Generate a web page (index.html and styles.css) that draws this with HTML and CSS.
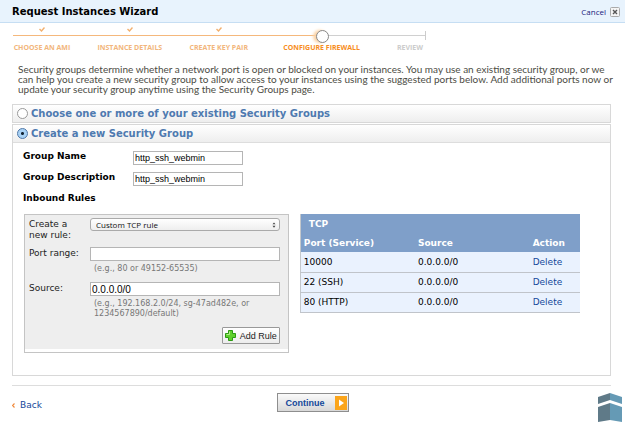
FILE: index.html
```html
<!DOCTYPE html>
<html lang="en">
<head>
    <meta charset="UTF-8">
    <meta name="viewport" content="width=device-width, initial-scale=1.0">
    <title>Request Instances Wizard</title>
    <link rel="stylesheet" href="styles.css">
</head>
<body>
    <header class="titlebar">
        <h1>Request Instances Wizard</h1>
        <button type="button" class="cancel">Cancel
            <svg class="close" viewBox="0 0 10 10"><rect x="0.5" y="0.5" width="9" height="9" rx="1" fill="#f4f4f4" stroke="#aaa"/><path d="M3 3l4 4M7 3l-4 4" stroke="#555" stroke-width="1.4"/></svg>
        </button>
    </header>

    <ol class="steps">
        <li class="done">
            <svg class="check" viewBox="0 0 6 5"><path d="M0.5 2l2 2 3-3.5" fill="none" stroke="#f2b06f" stroke-width="1.4"/></svg>
            <span class="track"></span>
            <span>CHOOSE AN AMI</span>
        </li>
        <li class="done">
            <svg class="check" viewBox="0 0 6 5"><path d="M0.5 2l2 2 3-3.5" fill="none" stroke="#f2b06f" stroke-width="1.4"/></svg>
            <span class="track"></span>
            <span>INSTANCE DETAILS</span>
        </li>
        <li class="done">
            <svg class="check" viewBox="0 0 6 5"><path d="M0.5 2l2 2 3-3.5" fill="none" stroke="#f2b06f" stroke-width="1.4"/></svg>
            <span class="track"></span>
            <span>CREATE KEY PAIR</span>
        </li>
        <li class="current">
            <span class="check"></span>
            <span class="track"></span>
            <span>CONFIGURE FIREWALL</span>
        </li>
        <li class="todo">
            <span class="check"></span>
            <span class="track"></span>
            <span>REVIEW</span>
        </li>
    </ol>

    <main>
        <p class="intro">Security groups determine whether a network port is open or blocked on your instances. You may use an existing security group, or we can help you create a new security group to allow access to your instances using the suggested ports below. Add additional ports now or update your security group anytime using the Security Groups page.</p>

        <div class="panel">
            <label class="panel-head"><input type="radio" name="group">Choose one or more of your existing Security Groups</label>
        </div>
        <div class="panel">
            <label class="panel-head"><input type="radio" name="group" checked>Create a new Security Group</label>
            <div class="panel-body">
                <div class="field">
                    <label for="name">Group Name</label>
                    <input type="text" id="name" value="http_ssh_webmin">
                </div>
                <div class="field">
                    <label for="desc">Group Description</label>
                    <input type="text" id="desc" value="http_ssh_webmin">
                </div>
                <h2>Inbound Rules</h2>

                <div class="rules">
                    <form class="rule-box">
                        <div class="rule-form">
                            <label for="rule">Create a new rule:</label>
                            <div class="select">
                                <select id="rule"><option>Custom TCP rule</option></select>
                                <svg viewBox="0 0 5 8"><path d="M2.5 0.5L4.5 3H0.5zM2.5 7.5L0.5 5h4z" fill="#444"/></svg>
                            </div>
                            <label for="port">Port range:</label>
                            <div>
                                <input type="text" id="port">
                                <p class="hint">(e.g., 80 or 49152-65535)</p>
                            </div>
                            <label for="source">Source:</label>
                            <div>
                                <input type="text" id="source" value="0.0.0.0/0">
                                <p class="hint">(e.g., 192.168.2.0/24, sg-47ad482e, or 1234567890/default)</p>
                            </div>
                            <button type="button" class="add">
                                <svg viewBox="0 0 11 11"><path d="M3.5 0.5h4v3h3v4h-3v3h-4v-3h-3v-4h3z" fill="#5fd02c" stroke="#2b9a12"/><path d="M4.5 1.5v3h-3" fill="none" stroke="#b4f08c"/></svg>
                                Add Rule
                            </button>
                        </div>
                    </form>

                    <table class="ports">
                        <thead>
                            <tr><th colspan="3" class="proto">TCP</th></tr>
                            <tr><th>Port (Service)</th><th>Source</th><th>Action</th></tr>
                        </thead>
                        <tbody>
                            <tr><td>10000</td><td>0.0.0.0/0</td><td><a href="#">Delete</a></td></tr>
                            <tr><td>22 (SSH)</td><td>0.0.0.0/0</td><td><a href="#">Delete</a></td></tr>
                            <tr><td>80 (HTTP)</td><td>0.0.0.0/0</td><td><a href="#">Delete</a></td></tr>
                        </tbody>
                    </table>
                </div>
            </div>
        </div>
        <hr>
    </main>

    <footer>
        <a href="#" class="back"><svg viewBox="0 0 3 5"><path d="M2.5 0.5l-2 2 2 2" fill="none" stroke="#f08a3c" stroke-width="1.2"/></svg>Back</a>
        <button type="button" class="continue">Continue
            <svg viewBox="0 0 12 14"><rect width="12" height="14" fill="#fba51b"/><path d="M4 3.5l5 3.5-5 3.5z" fill="#fff"/></svg>
        </button>
        <svg class="logo" viewBox="0 0 24 29">
            <path d="M0 4l12-4v7L0 11z" fill="#5f7a88"/>
            <path d="M12 0l12 4v7L12 7z" fill="#659ab5"/>
            <path d="M0 14l12-4v17L0 29z" fill="#5f7a88"/>
            <path d="M12 10l12 4v15l-12-2z" fill="#659ab5"/>
        </svg>
    </footer>
</body>
</html>
```
FILE: styles.css
```css
* {
    box-sizing: border-box;
}

body {
    margin: 0;
    background-color: #fff;
    color: #000;
    font-family: Verdana, "DejaVu Sans", sans-serif;
    font-size: 9px;
}

input, select, button {
    font-family: Arial, "Liberation Sans", sans-serif;
    font-size: 9px;
    margin: 0;
}

svg {
    flex: none;
}

a {
    color: #14489a;
    text-decoration: none;
}

.titlebar {
    display: flex;
    justify-content: space-between;
    align-items: center;
    height: 23px;
    padding: 1px 5px 0 12px;
    background-color: #e8f3fd;
    border-bottom: 1px solid #c6def3;
}

h1 {
    margin: 0;
    font-size: 10px;
}

.cancel {
    display: flex;
    align-items: center;
    gap: 4px;
    padding: 0;
    border: 0;
    background: none;
    color: #1a1a7c;
    font-family: "Open Sans", sans-serif;
    font-size: 8px;
}

.close {
    width: 10px;
    height: 10px;
}

/* wizard steps */
.steps {
    display: grid;
    grid-template-columns: 58fr 118fr 60fr 146fr 31fr;
    width: 66%;
    margin: 0 0 0 13px;
    padding: 4px 0 0;
    list-style: none;
    font-family: "Open Sans", sans-serif;
    font-size: 7px;
    font-weight: bold;
    line-height: 12px;
    white-space: nowrap;
}

.steps li {
    display: flex;
    flex-direction: column;
    align-items: center;
    min-width: 0;
    color: #f2b67c;
}

.check {
    width: 6px;
    height: 5px;
}

.track {
    position: relative;
    width: 100%;
    height: 1px;
    margin: 3px 0 6px;
    background-color: #f5b87c;
}

.steps .current {
    color: #f78d1e;
}

.current .track {
    background: linear-gradient(to right, #f5b87c 50%, #d0d0d0 50%);
}

.current .track::before {
    content: "";
    position: absolute;
    left: 50%;
    top: -5px;
    width: 11px;
    height: 11px;
    margin-left: -6px;
    border: 1px solid #888;
    border-radius: 50%;
    background-color: #fff;
    box-shadow: -3px 0 3px #fbd3a6;
}

.steps .todo {
    color: #ccc;
}

.todo .track {
    background-color: #d0d0d0;
}

.todo .track::after {
    content: "";
    position: absolute;
    right: 0;
    top: -4px;
    width: 1px;
    height: 9px;
    background-color: #ccc;
}

main {
    padding: 0 14px 0 12px;
}

.intro {
    margin: 10px -6px 10px 0;
    padding-left: 6px;
    color: #4c4c44;
    font-family: Lato, sans-serif;
    font-size: 10px;
    line-height: 10px;
}

.panel {
    margin-bottom: 1px;
    border: 1px solid #d8d8d8;
}

.panel-head {
    display: flex;
    align-items: center;
    gap: 3px;
    height: 17px;
    padding-left: 4px;
    background: linear-gradient(#fff, #eee);
    color: #4e7ab0;
    font-size: 10px;
    font-weight: bold;
}

.panel-head input {
    appearance: none;
    width: 11px;
    height: 11px;
    border: 1px solid #999;
    border-radius: 50%;
    background-color: #fff;
}

.panel-head input:checked {
    border-color: #4c76a8;
    background: radial-gradient(circle, #123 0 1px, #a9d2f5 2px);
}

.panel-body {
    padding: 8px 30px 22px 10px;
    border-top: 1px solid #ddd;
}

.field {
    display: flex;
    align-items: flex-start;
    height: 21px;
    font-weight: bold;
}

.field label {
    width: 110px;
    line-height: 11px;
}

input[type="text"] {
    height: 14px;
    padding: 0 1px;
    border: 1px solid #b5b5b5;
    background-color: #fff;
}

.field input {
    width: 110px;
}

h2 {
    margin: 0 0 10px;
    font-size: 9px;
    line-height: 11px;
}

.rules {
    display: flex;
    align-items: flex-start;
    gap: 11px;
    padding-left: 1px;
}

.rule-box {
    flex: 264;
    padding-bottom: 3px;
    border: 1px solid #c4c4c4;
}

.rule-form {
    display: grid;
    grid-template-columns: 61px 1fr;
    padding: 3px 8px 5px 4px;
    background-color: #eee;
    color: #222;
    line-height: 11px;
}

.rule-form label {
    height: 29px;
    padding: 1px 4px 0 0;
}

.rule-form input {
    display: block;
    width: 100%;
    font-size: 10px;
}

.select {
    position: relative;
}

.select select {
    appearance: none;
    display: block;
    width: 100%;
    height: 13px;
    padding: 0 5px;
    border: 1px solid #aaa;
    border-radius: 3px;
    background: linear-gradient(#fff, #eee);
    color: #111;
    font-family: "Open Sans", sans-serif;
    font-size: 8px;
}

.select svg {
    position: absolute;
    right: 4px;
    top: 4px;
    width: 4px;
    height: 6px;
    pointer-events: none;
}

.hint {
    margin: 3px 0 8px;
    padding-left: 4px;
    color: #777;
    font-size: 8px;
    line-height: 10px;
}

.add {
    grid-column: 2;
    justify-self: end;
    display: flex;
    align-items: center;
    gap: 4px;
    height: 17px;
    padding: 0 2px;
    border: 1px solid #999;
    border-radius: 1px;
    background: linear-gradient(#fff, #ececec);
    color: #222;
}

.add svg {
    width: 11px;
    height: 11px;
}

.ports {
    flex: 281;
    border-collapse: collapse;
    border-left: 1px solid #c4c8cc;
    background-color: #eaf2fe;
}

.ports th, .ports td {
    width: 41%;
    padding: 0 3px;
    text-align: left;
}

.ports th:last-child, .ports td:last-child {
    width: 18%;
}

.ports th {
    height: 19px;
    background-color: #7f9fc9;
    color: #fff;
}

.ports .proto {
    padding-left: 8px;
}

.ports td {
    height: 20px;
    border-bottom: 1px solid #c0c4ca;
}

hr {
    margin: 9px 0 0;
    border: 0;
    border-top: 1px solid #ddd;
}

footer {
    display: grid;
    grid-template-columns: 1fr auto 1fr;
    align-items: start;
    padding: 7px 3px 0;
}

.back {
    display: flex;
    align-items: center;
    gap: 5px;
    padding: 7px 0 0 9px;
}

.back svg {
    width: 3px;
    height: 5px;
}

.continue {
    display: flex;
    align-items: center;
    gap: 10px;
    height: 19px;
    padding: 0 1px 0 8px;
    border: 1px solid #8e8e8e;
    background: linear-gradient(#fafafa, #d8d8d8);
    color: #14489a;
    font-weight: bold;
}

.continue svg {
    width: 12px;
    height: 14px;
}

.logo {
    justify-self: end;
    width: 24px;
    height: 29px;
}
```
